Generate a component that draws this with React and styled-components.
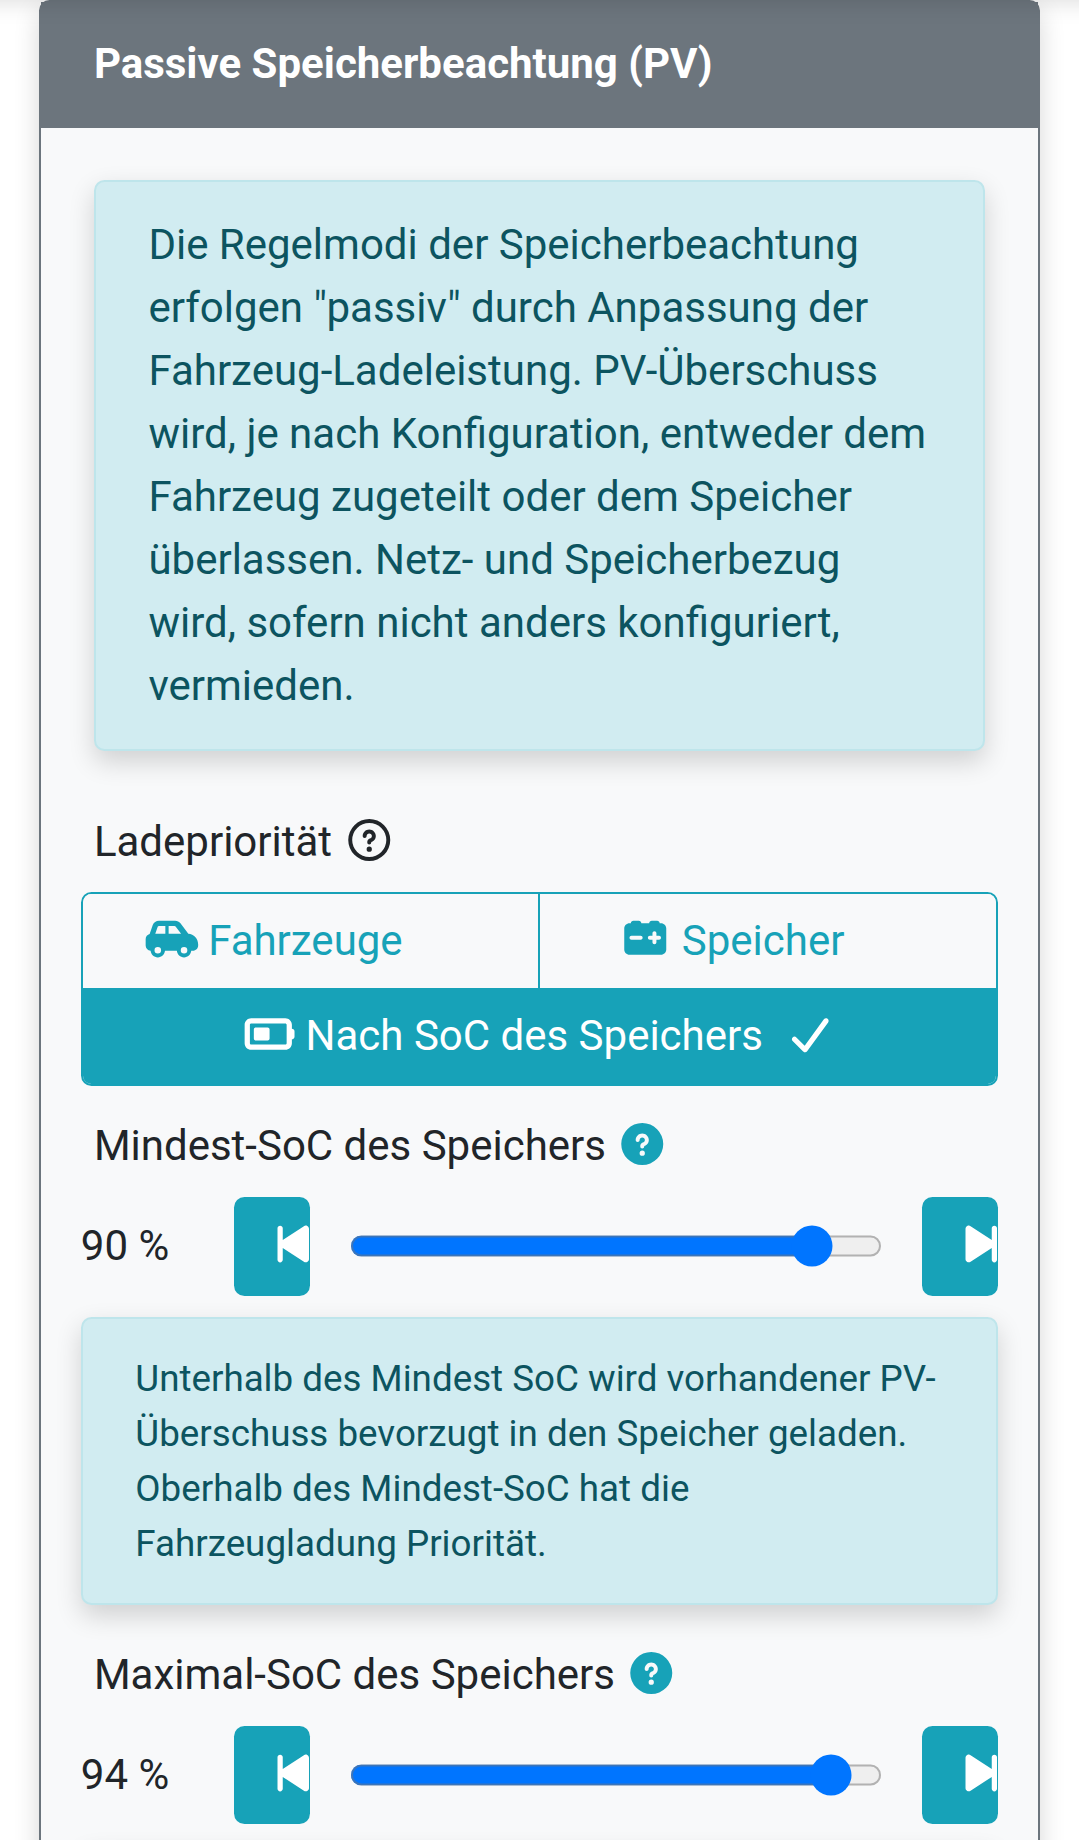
import React, { useState } from 'react';
import styled, { createGlobalStyle, css } from 'styled-components';

const ICONS = {
  questionOutline: {
    width: 512,
    path: 'M464 256a208 208 0 1 0 -416 0 208 208 0 1 0 416 0zM0 256a256 256 0 1 1 512 0 256 256 0 1 1 -512 0zm256-80c-17.7 0-32 14.3-32 32 0 13.3-10.7 24-24 24s-24-10.7-24-24c0-44.2 35.8-80 80-80s80 35.8 80 80c0 47.2-36 67.2-56 74.5l0 3.8c0 13.3-10.7 24-24 24s-24-10.7-24-24l0-8.1c0-20.5 14.8-35.2 30.1-40.2 6.4-2.1 13.2-5.5 18.2-10.3 4.3-4.2 7.7-10 7.7-19.6 0-17.7-14.3-32-32-32zM224 368a32 32 0 1 1 64 0 32 32 0 1 1 -64 0z',
  },
  question: {
    width: 512,
    path: 'M256 512a256 256 0 1 0 0-512 256 256 0 1 0 0 512zm0-336c-17.7 0-32 14.3-32 32 0 13.3-10.7 24-24 24s-24-10.7-24-24c0-44.2 35.8-80 80-80s80 35.8 80 80c0 47.2-36 67.2-56 74.5l0 3.8c0 13.3-10.7 24-24 24s-24-10.7-24-24l0-8.1c0-20.5 14.8-35.2 30.1-40.2 6.4-2.1 13.2-5.5 18.2-10.3 4.3-4.2 7.7-10 7.7-19.6 0-17.7-14.3-32-32-32zM224 368a32 32 0 1 1 64 0 32 32 0 1 1 -64 0z',
  },
  car: {
    width: 624,
    path: 'M147 106.7l-29.8 85.3 122.8 0 0-96-77.9 0c-6.8 0-12.8 4.3-15.1 10.7zM48.6 193.9L86.5 85.6C97.8 53.5 128.1 32 162.1 32L360 32c25.2 0 48.9 11.9 64 32l96.2 128.3C587.1 196.5 640 252.1 640 320l0 16c0 35.3-28.7 64-64 64l-20.4 0c-4 44.9-41.7 80-87.6 80s-83.6-35.1-87.6-80l-144.8 0c-4 44.9-41.7 80-87.6 80s-83.6-35.1-87.6-80C24.8 396.3 0 369 0 336l0-80c0-30.1 20.7-55.3 48.6-62.1zM432 192l-67.2-89.6c-3-4-7.8-6.4-12.8-6.4l-72 0 0 96 152 0zM148 432a40 40 0 1 0 0-80 40 40 0 1 0 0 80zm360-40a40 40 0 1 0 -80 0 40 40 0 1 0 80 0z',
  },
  carBattery: {
    width: 512,
    path: 'M80 64c0-17.7 14.3-32 32-32l64 0c17.7 0 32 14.3 32 32l96 0c0-17.7 14.3-32 32-32l64 0c17.7 0 32 14.3 32 32l16 0c35.3 0 64 28.7 64 64l0 256c0 35.3-28.7 64-64 64L64 448c-35.3 0-64-28.7-64-64L0 128c0-35.3 28.7-64 64-64l16 0zM392 184c0-13.3-10.7-24-24-24s-24 10.7-24 24l0 32-32 0c-13.3 0-24 10.7-24 24s10.7 24 24 24l32 0 0 32c0 13.3 10.7 24 24 24s24-10.7 24-24l0-32 32 0c13.3 0 24-10.7 24-24s-10.7-24-24-24l-32 0 0-32zM64 240c0 13.3 10.7 24 24 24l112 0c13.3 0 24-10.7 24-24s-10.7-24-24-24L88 216c-13.3 0-24 10.7-24 24z',
  },
  batteryHalf: {
    width: 600,
    path: 'M80 64C35.8 64 0 99.8 0 144L0 368c0 44.2 35.8 80 80 80l416 0c44.2 0 80-35.8 80-80l0-48c17.7 0 32-14.3 32-32l0-64c0-17.7-14.3-32-32-32l0-48c0-44.2-35.8-80-80-80L80 64zm416 64c8.8 0 16 7.2 16 16l0 224c0 8.8-7.2 16-16 16L80 384c-8.8 0-16-7.2-16-16l0-224c0-8.8 7.2-16 16-16l416 0zM136 176c-13.3 0-24 10.7-24 24l0 112c0 13.3 10.7 24 24 24l144 0c13.3 0 24-10.7 24-24l0-112c0-13.3-10.7-24-24-24l-144 0z',
  },
  check: {
    width: 448,
    path: 'M434.8 70.1c14.3 10.4 17.5 30.4 7.1 44.7l-256 352c-5.5 7.6-14 12.3-23.4 13.1s-18.5-2.7-25.1-9.3l-128-128c-12.5-12.5-12.5-32.8 0-45.3s32.8-12.5 45.3 0l101.5 101.5 234-321.7c10.4-14.3 30.4-17.5 44.7-7.1z',
  },
  stepForward: {
    width: 384,
    path: 'M21 36.8c12.9-7 28.7-6.3 41 1.8L320 208.3 320 64c0-17.7 14.3-32 32-32s32 14.3 32 32l0 384c0 17.7-14.3 32-32 32s-32-14.3-32-32l0-144.3-258 169.6c-12.3 8.1-28 8.8-41 1.8S0 454.7 0 440L0 72C0 57.3 8.1 43.8 21 36.8z',
  },
  stepBackward: {
    width: 384,
    path: 'M363 36.8c-12.9-7-28.7-6.3-41 1.8L64 208.3 64 64c0-17.7-14.3-32-32-32S0 46.3 0 64L0 448c0 17.7 14.3 32 32 32s32-14.3 32-32l0-144.3 258 169.6c12.3 8.1 28 8.8 41 1.8s21-20.4 21-35.1l0-368c0-14.7-8.1-28.2-21-35.2z',
  },
};

// every icon is centred on a 640 units wide canvas
const Icon = ({ name, ...rest }) => {
  const { width, path } = ICONS[name];

  return (
    <IconSvg viewBox={`${(width - 640) / 2} 0 640 512`} aria-hidden='true' {...rest}>
      <path d={path} fill='currentColor' />
    </IconSvg>
  );
};

const RangeInput = ({ initial, label }) => {
  const [value, setValue] = useState(initial);

  return (
    <RangeRow>
      <RangeValue>{value} %</RangeValue>
      <StepButton type='button' onClick={() => setValue(Math.max(0, value - 1))}>
        <Icon name='stepBackward' />
      </StepButton>
      <RangeTrack>
        <Slider
          type='range'
          min='0'
          max='100'
          value={value}
          aria-label={label}
          onChange={(e) => setValue(Number(e.target.value))}
        />
      </RangeTrack>
      <StepButton type='button' onClick={() => setValue(Math.min(100, value + 1))}>
        <Icon name='stepForward' />
      </StepButton>
    </RangeRow>
  );
};

const PRIORITIES = [
  { id: 'ev', icon: 'car', text: 'Fahrzeuge' },
  { id: 'bat', icon: 'carBattery', text: 'Speicher' },
  { id: 'soc', icon: 'batteryHalf', text: 'Nach SoC des Speichers' },
];

const App = () => {
  const [priority, setPriority] = useState('soc');

  return (
    <Page>
      <GlobalStyle />
      <NavBar />
      <Card>
        <CardHeader>Passive Speicherbeachtung (PV)</CardHeader>
        <CardBody>
          <Alert>
            Die Regelmodi der Speicherbeachtung erfolgen "passiv" durch Anpassung der
            Fahrzeug-Ladeleistung. PV-Überschuss wird, je nach Konfiguration, entweder dem
            Fahrzeug zugeteilt oder dem Speicher überlassen. Netz- und Speicherbezug wird,
            sofern nicht anders konfiguriert, vermieden.
          </Alert>

          <Label $top='59px' $bottom='19px'>
            Ladepriorität <Icon name='questionOutline' />
          </Label>
          <ButtonGroup>
            {PRIORITIES.map(({ id, icon, text }) => (
              <OptionButton
                key={id}
                type='button'
                $active={priority === id}
                onClick={() => setPriority(id)}
              >
                <Icon name={icon} /> {text} <CheckIcon name='check' $shown={priority === id} />
              </OptionButton>
            ))}
          </ButtonGroup>

          <Label $top='27.5px' $bottom='20.5px'>
            Mindest-SoC des Speichers <HelpIcon name='question' />
          </Label>
          <RangeInput initial={90} label='Mindest-SoC des Speichers' />
          <Alert $small>
            Unterhalb des Mindest SoC wird vorhandener PV-Überschuss bevorzugt in den
            Speicher geladen. Oberhalb des Mindest-SoC hat die Fahrzeugladung Priorität.
          </Alert>

          <Label $top='38px' $bottom='20px'>
            Maximal-SoC des Speichers <HelpIcon name='question' />
          </Label>
          <RangeInput initial={94} label='Maximal-SoC des Speichers' />
          <Alert $small />
        </CardBody>
      </Card>
    </Page>
  );
};

const GlobalStyle = createGlobalStyle`
  * {
    box-sizing: border-box;
  }

  body {
    margin: 0;
    background: #fff;
    color: #212529;
    font-family: Roboto, 'Noto Sans', sans-serif;
    font-size: 42px;
    line-height: 63px;
  }
`;

const shadow = css`
  box-shadow: 0 10.5px 26px rgba(0, 0, 0, 0.16);
`;

const Page = styled.main`
  position: relative;
  height: 1840px;
  padding: 0 39.4px;
  overflow: hidden;
`;

const NavBar = styled.nav`
  position: absolute;
  z-index: 1;
  top: -74px;
  left: -40px;
  right: -40px;
  height: 63px;
  ${shadow}
`;

const Card = styled.section`
  height: 2000px;
  background: #f8f9fa;
  border: 2px solid #6c757d;
  border-radius: 10.5px;
  ${shadow}
`;

const CardHeader = styled.header`
  height: 126px;
  padding: 29.5px 52.5px;
  background: #6c757d;
  color: #fff;
  font-weight: 700;
`;

const CardBody = styled.div`
  padding: 52px 52.5px;
`;

const Alert = styled.div`
  padding: 30.5px 52.5px 32.5px;
  background: #d1ecf1;
  border: 2px solid #bee5eb;
  border-radius: 10.5px;
  color: #0c5460;
  ${shadow}

  ${({ $small }) =>
    $small &&
    css`
      min-height: 122px;
      margin: 21.5px -13.1px 0;
      padding: 31.5px 52.5px;
      font-size: 36.75px;
      line-height: 55.125px;
    `}
`;

const Label = styled.div`
  margin: ${({ $top, $bottom }) => `${$top} 0 ${$bottom}`};
  height: 63px;
  white-space: nowrap;
`;

const IconSvg = styled.svg`
  width: 1.25em;
  height: 1em;
  vertical-align: -0.125em;
  overflow: visible;
`;

const HelpIcon = styled(Icon)`
  color: #17a2b8;
`;

const CheckIcon = styled(({ $shown, ...rest }) => <Icon {...rest} />)`
  margin-left: 10.5px;
  visibility: ${({ $shown }) => ($shown ? 'visible' : 'hidden')};
`;

const ButtonGroup = styled.div`
  display: grid;
  grid-template-columns: 1fr 1fr;
  grid-template-rows: 94px 96px;
  margin: 0 -13.1px;
  border: 2px solid #17a2b8;
  border-radius: 10.5px;
  height: 194px;
  overflow: hidden;
`;

const OptionButton = styled.button`
  padding: 0 0 1px 1px;
  border: 0;
  background: ${({ $active }) => ($active ? '#17a2b8' : '#f8f9fa')};
  color: ${({ $active }) => ($active ? '#fff' : '#17a2b8')};
  font: inherit;
  white-space: nowrap;

  &:first-child {
    border-right: 2px solid #17a2b8;
  }

  &:last-child {
    grid-column: 1 / -1;
    padding: 0 0 1px;
  }
`;

const RangeRow = styled.div`
  display: flex;
  align-items: center;
  height: 98.5px;
  margin: 0 -13.1px;
`;

const RangeValue = styled.span`
  width: 153px;
  margin-top: -1px;
`;

const StepButton = styled.button`
  flex: none;
  width: 76px;
  height: 98.5px;
  padding: 0 0 2px 33px;
  border: 0;
  border-radius: 10.5px;
  background: #17a2b8;
  color: #fff;
  font: inherit;
  text-align: left;
  overflow: hidden;
`;

const RangeTrack = styled.div`
  flex: 1;
  display: flex;
  padding: 0 40.5px;
`;

const Slider = styled.input`
  zoom: 2.625;
  width: 100%;
  margin: 0;
`;

export default App;
